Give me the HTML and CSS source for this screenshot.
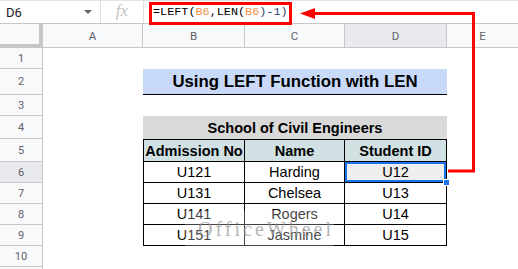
FILE: index.html
```html
<!DOCTYPE html>
<html>
<head>
<meta charset="utf-8">
<link rel="stylesheet" href="styles.css">
</head>
<body>
<div class="page">
  <div class="toolbar">
    <div class="namebox"><span class="nm">D6</span><span class="caret"></span></div>
    <div class="fx">fx</div>
    <div class="formula"><span class="k">=LEFT(</span><span class="ref">B6</span><span class="k">,LEN(</span><span class="ref">B6</span><span class="p">)-1)</span></div>
  </div>
  <div class="grid">
    <div class="corner"></div>
    <div class="ch">A</div><div class="ch">B</div><div class="ch">C</div><div class="ch sel">D</div><div class="ch last">E</div>

    <div class="rh">1</div><div class="c"></div><div class="c span3"></div><div class="c"></div>

    <div class="rh">2</div><div class="c"></div><div class="c span3 title">Using LEFT Function with LEN</div><div class="c"></div>

    <div class="rh">3</div><div class="c"></div><div class="c span3"></div><div class="c"></div>

    <div class="rh">4</div><div class="c"></div><div class="c span3 school">School of Civil Engineers</div><div class="c"></div>

    <div class="rh">5</div><div class="c"></div><div class="c t th first top">Admission No</div><div class="c t th top">Name</div><div class="c t th top">Student ID</div><div class="c"></div>

    <div class="rh sel">6</div><div class="c"></div><div class="c t first">U121</div><div class="c t">Harding</div><div class="c t active">U12<span class="handle"></span></div><div class="c"></div>

    <div class="rh">7</div><div class="c"></div><div class="c t first">U131</div><div class="c t">Chelsea</div><div class="c t">U13</div><div class="c"></div>

    <div class="rh">8</div><div class="c"></div><div class="c t first">U141</div><div class="c t">Rogers</div><div class="c t">U14</div><div class="c"></div>

    <div class="rh">9</div><div class="c"></div><div class="c t first">U151</div><div class="c t">Jasmine</div><div class="c t">U15</div><div class="c"></div>

    <div class="rh">10</div><div class="c"></div><div class="c span3"></div><div class="c"></div>

    <div class="rh"></div><div class="c"></div><div class="c span3"></div><div class="c"></div>
  </div>

  <div class="watermark">
    <svg class="wm-logo" width="26" height="28" viewBox="0 0 26 28">
      <polygon points="13,2 24,8 24,20 13,26 2,20 2,8" fill="none" stroke="#9a9a9a" stroke-width="2"/>
      <polygon points="13,7 19,10.5 19,17.5 13,21 7,17.5 7,10.5" fill="none" stroke="#b0b0b0" stroke-width="2"/>
    </svg>
    <span class="wm-text">OfficeWheel</span>
  </div>

  <svg class="annot" width="518" height="269" viewBox="0 0 518 269">
    <rect x="150.5" y="3.5" width="140" height="20" fill="none" stroke="#ff0000" stroke-width="3"/>
    <polyline points="448,171 473.5,171 473.5,13.5 312,13.5" fill="none" stroke="#ff0000" stroke-width="3"/>
    <polygon points="300,13.5 315,8 315,19" fill="#ff0000"/>
  </svg>
</div>
</body>
</html>
```
FILE: styles.css
```css
* { box-sizing: border-box; }
html, body { margin: 0; padding: 0; background: #fff; }
body { width: 518px; height: 269px; overflow: hidden; font-family: "Liberation Sans", Arial, sans-serif; }
.page { position: relative; width: 518px; height: 269px; overflow: hidden; }

.toolbar {
  height: 24px;
  display: flex;
  align-items: stretch;
  border-top: 1px solid #e3e3e3;
  border-bottom: 1px solid #c7c7c7;
  background: #fff;
}
.namebox {
  width: 101px;
  display: flex;
  align-items: center;
  justify-content: space-between;
  padding: 0 8px 0 6px;
  border-right: 1px solid #e0e0e0;
}
.nm { font-family: Roboto, "Liberation Sans", sans-serif; font-size: 13px; color: #202124; }
.caret {
  width: 0; height: 0;
  border-left: 4px solid transparent;
  border-right: 4px solid transparent;
  border-top: 4px solid #5f6368;
}
.fx {
  width: 43px;
  display: flex;
  align-items: center;
  justify-content: center;
  font-family: "Liberation Serif", serif;
  font-style: italic;
  font-size: 17px;
  color: #c4c4c4;
  border-right: 1px solid #e0e0e0;
  padding-bottom: 2px;
}
.formula {
  display: flex;
  align-items: center;
  padding-left: 9px;
  font-family: "Liberation Mono", monospace;
  font-size: 11.8px;
  color: #000;
  white-space: pre;
}
.ref { color: #f0924a; }
.p { color: #2b3e6b; }

.grid {
  display: grid;
  grid-template-columns: 43px 100px 102px 100px 102px 71px;
  grid-template-rows: 24px 21px 26px 21px 23px 23px 21px 21px 21px 21px 21px 21px;
}
.corner {
  background: #f8f9fa;
  border-right: 4px solid #c4c7c5;
  border-bottom: 4px solid #c4c7c5;
}
.ch {
  background: #f8f9fa;
  border-right: 1px solid #c7c7c7;
  border-bottom: 1px solid #c7c7c7;
  display: flex; align-items: center; justify-content: center;
  font-family: Roboto, "Liberation Sans", sans-serif;
  font-size: 11.5px;
  color: #5f6368;
}
.ch.last { border-right: none; }
.ch.sel, .rh.sel { background: #e8eaed; }
.rh {
  background: #f8f9fa;
  border-right: 1px solid #c7c7c7;
  border-bottom: 1px solid #c7c7c7;
  display: flex; align-items: center; justify-content: center;
  font-family: Roboto, "Liberation Sans", sans-serif;
  font-size: 11px;
  color: #5f6368;
}
.c {
  background: #fff;
  display: flex; align-items: center; justify-content: center;
  font-size: 14.5px;
  color: #000;
  position: relative;
}
.span3 { grid-column: span 3; }
.title {
  background: #c9daf8;
  border-bottom: 1px solid #000;
  font-weight: bold;
  font-size: 16.8px;
}
.school {
  background: #d9d9d9;
  font-weight: bold;
  font-size: 14.5px;
}
.t {
  border-right: 1px solid #000;
  border-bottom: 1px solid #000;
}
.t.first { border-left: 1px solid #000; }
.t.top { border-top: 1px solid #000; }
.th { background: #d0e0e3; font-weight: bold; }
.active {
  background: #eeeeee;
  box-shadow: inset 0 0 0 2px #1a73e8;
}
.handle {
  position: absolute;
  right: -4px;
  bottom: -4px;
  width: 7px;
  height: 7px;
  background: #1a73e8;
  border: 1px solid #fff;
  z-index: 2;
}

.watermark {
  position: absolute;
  left: 185px;
  top: 211px;
  width: 149px;
  height: 37px;
  background: rgba(255,255,255,0.35);
  display: flex;
  align-items: center;
  gap: 6px;
  padding-left: 6px;
  opacity: 0.75;
}
.wm-text {
  font-family: "Liberation Serif", serif;
  font-size: 20px;
  letter-spacing: 3px;
  color: #a0a0a0;
}
.annot { position: absolute; left: 0; top: 0; pointer-events: none; }
```
